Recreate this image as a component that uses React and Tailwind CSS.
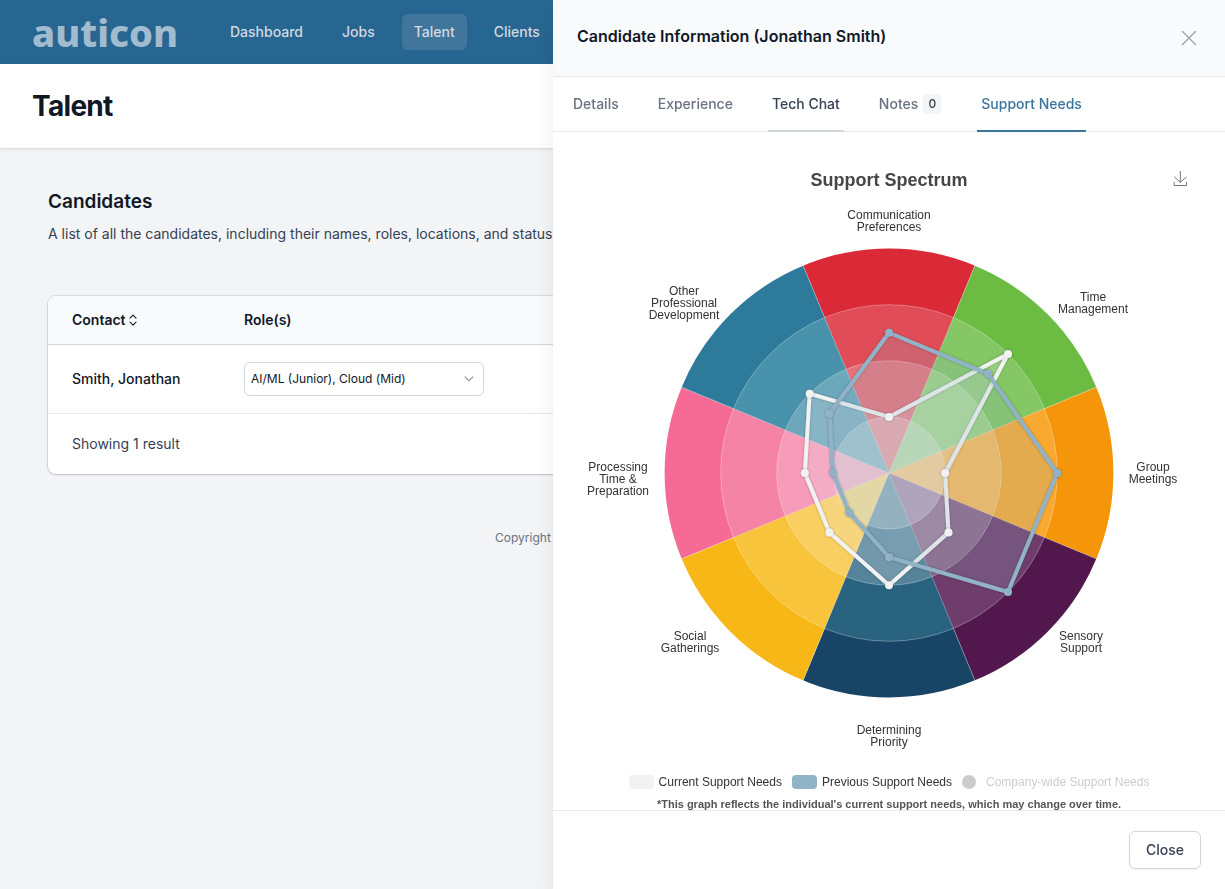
import React from "react";

const CX = 336;
const CY = 273;
const STEP = 56.1;

const sectors = [
  { label: ["Communication", "Preferences"], x: 336, y: 19, rings: ["#eb979d", "#e6727b", "#e04d58", "#da2a38"] },
  { label: ["Time", "Management"], x: 540, y: 101, rings: ["#b6dda6", "#9ed482", "#84c764", "#6cbb43"] },
  { label: ["Group", "Meetings"], x: 600, y: 271, rings: ["#fac981", "#fbb95a", "#f9a830", "#f59509"] },
  { label: ["Sensory", "Support"], x: 528, y: 440, rings: ["#a98eab", "#8c6388", "#6e3d6b", "#52184e"] },
  { label: ["Determining", "Priority"], x: 336, y: 534, rings: ["#7fa2b3", "#54839a", "#29637f", "#184465"] },
  { label: ["Social", "Gatherings"], x: 137, y: 440, rings: ["#fcdc8a", "#f9cf61", "#f7c43b", "#f7b716"] },
  { label: ["Processing", "Time &", "Preparation"], x: 65, y: 271, rings: ["#f9b8ca", "#f69bb9", "#f583a6", "#f56b96"] },
  { label: ["Other", "Professional", "Development"], x: 131, y: 95, rings: ["#90bbc8", "#6da7bc", "#4992ac", "#2d7a9b"] },
];

const series = [
  { color: "#f1f2f2", values: [1, 3, 1, 1.5, 2, 1.5, 1.5, 2] },
  { color: "#91b3c8", values: [2.5, 2.5, 3, 3, 1.5, 1, 1, 1.5] },
];

const polar = (r, deg) => {
  const a = ((deg - 90) * Math.PI) / 180;
  return [CX + r * Math.cos(a), CY + r * Math.sin(a)];
};

const wedge = (i, r) => {
  const [x1, y1] = polar(r, i * 45 - 22.5);
  const [x2, y2] = polar(r, i * 45 + 22.5);
  return `M${CX} ${CY}L${x1} ${y1}A${r} ${r} 0 0 1 ${x2} ${y2}Z`;
};

const seriesPoints = (values) => values.map((v, i) => polar(v * STEP, i * 45));

function SeriesArea({ values, color }) {
  const path = seriesPoints(values)
    .map((p) => p.join(","))
    .join(" ");
  return (
    <g>
      <polygon points={path} fill={color} fillOpacity="0.2" />
      <polygon points={path} fill="none" stroke={color} strokeWidth="4" strokeLinejoin="bevel" filter="url(#lineShadow)" />
    </g>
  );
}

function SeriesNodes({ values, color }) {
  return seriesPoints(values).map(([x, y], i) => (
    <circle key={i} cx={x} cy={y} r="4" fill={color} filter="url(#lineShadow)" />
  ));
}

function SpectrumChart() {
  return (
    <svg viewBox="0 0 672 560" className="block w-full" role="img" aria-label="Support Spectrum">
      <defs>
        <filter id="lineShadow" x="-50%" y="-50%" width="200%" height="200%">
          <feDropShadow dx="0" dy="0" stdDeviation="1.3" floodColor="#000" floodOpacity="0.35" />
        </filter>
      </defs>
      {[4, 3, 2, 1].map((ring) =>
        sectors.map((s, i) => <path key={`${ring}-${i}`} d={wedge(i, ring * STEP)} fill={s.rings[ring - 1]} />)
      )}
      <g stroke="#fff" strokeOpacity="0.3" fill="none">
        {[1, 2, 3].map((ring) => (
          <circle key={ring} cx={CX} cy={CY} r={ring * STEP} />
        ))}
        {sectors.map((_, i) => {
          const [x, y] = polar(4 * STEP, i * 45 + 22.5);
          return <line key={i} x1={CX} y1={CY} x2={x} y2={y} />;
        })}
      </g>
      {series.map((s) => (
        <SeriesArea key={s.color} {...s} />
      ))}
      {series.map((s) => (
        <SeriesNodes key={s.color} {...s} />
      ))}
      {sectors.map((s) => (
        <text key={s.label[0]} textAnchor="middle" fontSize="12" fill="#333" className="font-['Liberation_Sans',sans-serif]">
          {s.label.map((line, i) => (
            <tspan key={line} x={s.x} y={s.y + i * 12}>
              {line}
            </tspan>
          ))}
        </text>
      ))}
    </svg>
  );
}

const navItems = ["Dashboard", "Jobs", "Talent", "Clients"];

function Page() {
  return (
    <div className="min-h-screen bg-gray-100">
      <nav className="flex h-16 items-center bg-[#266690] px-8">
        <a href="#home" className="w-[186px] font-['Noto_Sans',sans-serif] text-[38px] leading-[48px] font-extrabold text-[#a1bbcf]">
          auticon
        </a>
        <div className="flex gap-[15px]">
          {navItems.map((item) => (
            <a
              key={item}
              href={`#${item.toLowerCase()}`}
              className={`rounded-md px-3 py-2 text-sm font-medium text-[#d2d9e0] ${item === "Talent" ? "bg-[#40769c]" : ""}`}
            >
              {item}
            </a>
          ))}
        </div>
      </nav>
      <header className="bg-white px-8 py-6 shadow-sm">
        <h1 className="text-[28px] leading-9 font-bold tracking-tight text-gray-900">Talent</h1>
      </header>
      <main className="px-12 pt-10">
        <h2 className="text-[19px] leading-7 font-semibold text-gray-900">Candidates</h2>
        <p className="mt-2 text-sm text-gray-700">
          A list of all the candidates, including their names, roles, locations, and statuses.
        </p>
        <div className="mt-[52px] overflow-hidden rounded-lg bg-white shadow-sm ring-1 ring-gray-900/10">
          <table className="w-full text-left text-sm text-gray-900">
            <thead className="bg-gray-50">
              <tr className="h-12 border-b border-gray-300">
                <th scope="col" className="w-[172px] pl-6 font-semibold">
                  <button type="button" className="flex items-center gap-[3px] font-semibold">
                    Contact
                    <svg viewBox="0 0 8 12" className="h-3 w-2" fill="none" stroke="currentColor" strokeWidth="1.1" strokeLinecap="round" strokeLinejoin="round">
                      <path d="M1 4.2 4 1.2l3 3M1 8.2l3 3 3-3" />
                    </svg>
                  </button>
                </th>
                <th scope="col" className="pl-6 font-semibold">Role(s)</th>
              </tr>
            </thead>
            <tbody>
              <tr className="h-[69px] border-b border-gray-200">
                <td className="pl-6 font-medium whitespace-nowrap">Smith, Jonathan</td>
                <td className="pl-6">
                  <div className="relative w-60">
                    <select
                      aria-label="Roles"
                      className="block h-[34px] w-full appearance-none rounded-md border border-gray-300 bg-white pr-8 pl-1.5 text-xs text-gray-900"
                    >
                      <option>AI/ML (Junior), Cloud (Mid)</option>
                    </select>
                    <svg viewBox="0 0 10 6" className="pointer-events-none absolute top-3.5 right-2.5 h-1.5 w-2.5" fill="none" stroke="#9ca3af" strokeWidth="1.3" strokeLinecap="round" strokeLinejoin="round">
                      <path d="m1.2 1 3.8 3.8L8.8 1" />
                    </svg>
                  </div>
                </td>
              </tr>
            </tbody>
            <tfoot>
              <tr className="h-[61px]">
                <td colSpan={2} className="pl-6 text-gray-700">Showing 1 result</td>
              </tr>
            </tfoot>
          </table>
        </div>
      </main>
      <footer className="mx-auto mt-14 w-[235px] text-xs text-gray-500">Copyright</footer>
    </div>
  );
}

const tabs = [
  { name: "Details", style: "border-transparent text-gray-500" },
  { name: "Experience", style: "border-transparent text-gray-500" },
  { name: "Tech Chat", style: "border-gray-300 text-gray-700" },
  { name: "Notes", style: "border-transparent text-gray-500", count: 0 },
  { name: "Support Needs", style: "border-[#3a759d] text-[#3a759d]", active: true },
];

function CandidatePanel() {
  return (
    <section
      role="dialog"
      aria-labelledby="panel-title"
      className="fixed inset-y-0 right-0 flex w-full max-w-2xl flex-col bg-white shadow-xl"
    >
      <header className="flex items-start justify-between border-b border-gray-200 bg-gray-50 px-6 pt-6 pb-7">
        <h2 id="panel-title" className="text-base font-semibold text-gray-900">
          Candidate Information (Jonathan Smith)
        </h2>
        <button type="button" aria-label="Close panel" className="mt-0.5 -mb-0.5 text-gray-400">
          <svg viewBox="0 0 24 24" className="h-6 w-6" fill="none" stroke="currentColor" strokeWidth="1.3" strokeLinecap="round">
            <path d="M5.5 5.5l13 13M18.5 5.5l-13 13" />
          </svg>
        </button>
      </header>
      <div role="tablist" className="flex gap-[31px] border-b border-gray-200 px-4">
        {tabs.map((t) => (
          <button
            key={t.name}
            type="button"
            role="tab"
            aria-selected={!!t.active}
            className={`-mb-px flex items-center border-b-2 px-1 py-4 text-sm leading-[21px] font-medium whitespace-nowrap ${t.style}`}
          >
            {t.name}
            {t.count !== undefined && (
              <span className="ml-1 w-5 rounded-md bg-gray-100 text-center text-xs leading-5 text-gray-700">{t.count}</span>
            )}
          </button>
        ))}
      </div>
      <div className="min-h-0 flex-1 overflow-hidden font-['Liberation_Sans',sans-serif]">
        <div className="grid h-[68px] grid-cols-[1fr_auto_1fr] items-center px-[37px] pt-7">
          <h3 className="col-start-2 text-lg font-bold text-[#464646]">Support Spectrum</h3>
          <button type="button" aria-label="Save as image" className="justify-self-end pb-1">
            <svg viewBox="2 0 56 60" className="size-[15px]" fill="none" stroke="#666" strokeWidth="3.6">
              <path d="M4.7 22.9 29.3 45.5 54.7 23.4M4.6 43.6V58H53.8V43.6M29.2 45.1V0" />
            </svg>
          </button>
        </div>
        <SpectrumChart />
        <div className="mt-3.5 flex justify-center gap-2.5 text-xs text-[#333]">
          <button type="button" className="flex items-center gap-[5px] whitespace-nowrap">
            <span className="h-3.5 w-[25px] rounded-sm bg-[#f1f2f2]" />
            Current Support Needs
          </button>
          <button type="button" className="flex items-center gap-[5px] whitespace-nowrap">
            <span className="h-3.5 w-[25px] rounded-sm bg-[#91b3c8]" />
            Previous Support Needs
          </button>
          <button type="button" className="flex items-center gap-2.5 whitespace-nowrap text-[#ccc]">
            <span className="size-3.5 rounded-full bg-[#ccc]" />
            Company-wide Support Needs
          </button>
        </div>
        <p className="mt-2 text-center text-[11px] leading-3 font-bold text-[#555]">
          *This graph reflects the individual's current support needs, which may change over time.
        </p>
      </div>
      <footer className="flex justify-end border-t border-gray-200 px-6 py-5">
        <button type="button" className="rounded-md border border-gray-300 bg-white px-4 py-2 text-sm font-medium text-gray-700 shadow-xs">
          Close
        </button>
      </footer>
    </section>
  );
}

export default function App() {
  return (
    <div className="overflow-hidden font-[Inter,sans-serif]">
      <Page />
      <CandidatePanel />
    </div>
  );
}
